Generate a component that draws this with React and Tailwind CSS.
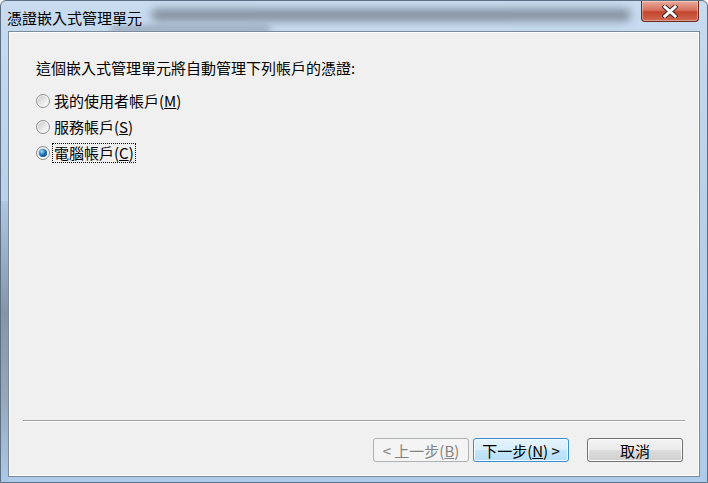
import React from 'react';

const font = { fontFamily: '"Noto Sans CJK TC", "Noto Sans", sans-serif' };

const Radio = ({ checked }) => (
  <span className="flex h-[14px] w-[14px] shrink-0 items-center justify-center rounded-full border border-[#8c8e90] bg-[linear-gradient(135deg,#c4c4c4,#eeeeee_65%,#ffffff)] shadow-[inset_0_0_0_1px_#f6f6f6]">
    {checked && (
      <span className="h-[8px] w-[8px] rounded-full bg-[radial-gradient(circle_at_35%_30%,#a9dcfa,#1f74b8_45%,#0a325c)]" />
    )}
  </span>
);

const Option = ({ label, hotkey, checked, focused }) => (
  <div className="flex h-[26px] items-center gap-[3px]">
    <Radio checked={checked} />
    <span
      className={`px-[1px] text-[15px] leading-[18px] text-black ${
        focused ? 'outline outline-1 outline-dotted outline-black' : ''
      }`}
    >
      {label}(<span className="underline">{hotkey}</span>)
    </span>
  </div>
);

const CloseButton = () => (
  <div className="absolute right-[8px] top-0 flex h-[21px] w-[58px] items-center justify-center rounded-b-[4px] border border-t-0 border-[#6b2a20] bg-[linear-gradient(#e9a99b,#d7735f_45%,#c3452f_55%,#cf6a4f)] shadow-[inset_0_0_0_1px_rgba(255,255,255,0.35)]">
    <svg width="16" height="13" viewBox="0 0 16 13">
      <path d="M3 2 L13 11 M13 2 L3 11" stroke="#4a2a26" strokeWidth="5" strokeLinecap="square" />
      <path d="M3 2 L13 11 M13 2 L3 11" stroke="#ffffff" strokeWidth="3" strokeLinecap="square" />
    </svg>
  </div>
);

const App = () => {
  return (
    <div
      className="relative flex h-[483px] w-[708px] flex-col overflow-hidden rounded-t-[6px] border border-[#5d6f83] bg-[linear-gradient(#c8dbef,#b9d1ea_40%,#aecbe9)]"
      style={font}
    >
      {/* blurred desktop behind the glass */}
      <div className="pointer-events-none absolute left-[150px] top-[8px] h-[12px] w-[480px] rounded-full bg-[#4a515c] opacity-55 blur-[4px]" />
      <div className="pointer-events-none absolute left-[110px] top-[25px] h-[6px] w-[160px] rounded-full bg-[#4a515c] opacity-40 blur-[3px]" />
      <div className="pointer-events-none absolute left-0 top-[200px] h-[280px] w-[7px] bg-[linear-gradient(#a9c3de,#6f7c8a_40%,#8b97a3_70%,#a9c7e6)] opacity-70" />

      {/* title bar */}
      <div className="relative flex h-[30px] shrink-0 items-center pl-[6px] pt-[3px]">
        <span className="text-[15px] leading-none text-black">憑證嵌入式管理單元</span>
        <CloseButton />
      </div>

      {/* client area */}
      <div className="relative mx-[7px] mb-[5px] flex flex-1 flex-col border border-[#7b8a9b] bg-[#f0f0f0] shadow-[inset_0_0_0_1px_#ffffff]">
        <div className="flex flex-col pl-[27px] pt-[26px]">
          <p className="text-[15px] leading-[20px] text-black">這個嵌入式管理單元將自動管理下列帳戶的憑證:</p>
          <div className="mt-[10px] flex flex-col">
            <Option label="我的使用者帳戶" hotkey="M" />
            <Option label="服務帳戶" hotkey="S" />
            <Option label="電腦帳戶" hotkey="C" checked focused />
          </div>
        </div>

        <div className="mx-[14px] mt-auto h-[1px] bg-[#a0a0a0] shadow-[0_1px_0_#ffffff]" />

        <div className="mb-[14px] mr-[16px] mt-[17px] flex justify-end">
          <button
            disabled
            className="flex h-[24px] w-[96px] items-center justify-center rounded-[3px] border border-[#adb2b5] bg-[#f4f4f4] text-[15px] leading-none text-[#838383]"
          >
            &lt; 上一步(<span className="underline">B</span>)
          </button>
          <button className="ml-[4px] flex h-[24px] w-[96px] items-center justify-center rounded-[3px] border border-[#3c8fce] bg-[linear-gradient(#e5f4fd,#d9effc_50%,#c4e6fb_50%,#b6def8)] text-[15px] leading-none text-black shadow-[inset_0_0_0_1px_#f0faff]">
            下一步(<span className="underline">N</span>) &gt;
          </button>
          <button className="ml-[18px] flex h-[24px] w-[96px] items-center justify-center rounded-[3px] border border-[#707070] bg-[linear-gradient(#f2f2f2,#ebebeb_50%,#dddddd_50%,#cfcfcf)] text-[15px] leading-none text-black shadow-[inset_0_0_0_1px_#fcfcfc]">
            取消
          </button>
        </div>
      </div>
    </div>
  );
};

export default App;
